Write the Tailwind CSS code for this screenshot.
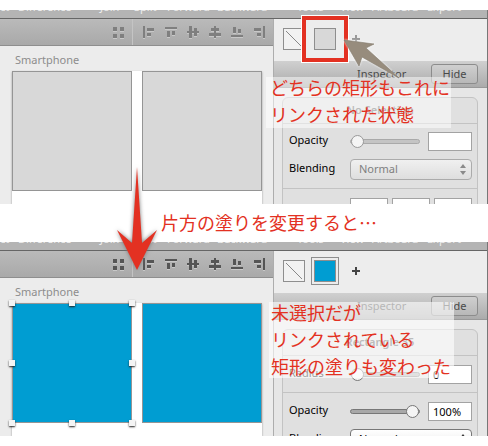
<!DOCTYPE html>
<html lang="ja">
<head>
<meta charset="utf-8">
<meta name="viewport" content="width=device-width, initial-scale=1">
<title>Linked fills</title>
<script src="https://cdn.jsdelivr.net/npm/@tailwindcss/browser@4"></script>
</head>
<body class="bg-white font-['Noto_Sans','Noto_Sans_CJK_JP',sans-serif] text-[11px] leading-4 text-black">

<svg class="hidden" aria-hidden="true">
  <symbol id="grid" viewBox="0 0 12 12"><path d="M0 1h4v4H0zM7 1h4v4H7zM0 8h4v4H0zM7 8h4v4H7z"/></symbol>
  <symbol id="a-left" viewBox="0 0 12 12"><path d="M0 0h2v12H0zM4 2h7v3H4zM4 7h4v3H4z"/></symbol>
  <symbol id="a-top" viewBox="0 0 12 12"><path d="M0 1h12v2H0zM2 5h3v6H2zM7 5h3v4H7z"/></symbol>
  <symbol id="a-mid" viewBox="0 0 12 12"><path d="M0 5h12v2H0zM2 0h3v12H2zM7 2h3v8H7z"/></symbol>
  <symbol id="a-center" viewBox="0 0 12 12"><path d="M5 0h2v12H5zM2 2h8v3H2zM0 7h12v3H0z"/></symbol>
  <symbol id="a-bottom" viewBox="0 0 12 12"><path d="M0 9h12v2H0zM2 1h3v6H2zM7 3h3v4H7z"/></symbol>
  <symbol id="a-right" viewBox="0 0 12 12"><path d="M10 0h2v12h-2zM1 2h7v3H1zM4 7h4v3H4z"/></symbol>
</svg>

<main class="relative pt-[10px]">

  <!-- Before -->
  <section class="relative">
    <div class="flex h-[194px] flex-col overflow-hidden border-r border-[#777]">
      <header class="flex h-[9px] shrink-0 items-end justify-between overflow-hidden border-b border-[#666] bg-[#b4b4b4] text-[#eee]">
        <div class="flex h-full items-end pb-[3px] whitespace-nowrap"><span class="w-[18px]">ct</span><span class="w-[82px]">Difference</span><span class="w-[34px]">Join</span><span class="w-[33px]">Split</span><span class="w-[50px]">Forward</span><span>Backward</span></div>
        <div class="flex h-full w-[190px] items-end pb-[3px] whitespace-nowrap"><span class="w-[43px]">Tools</span><span class="w-8">View</span><span class="w-[55px]">Artboard</span><span>Export</span></div>
      </header>
      <div class="flex min-h-0 flex-1">
        <div class="flex min-w-0 flex-1 flex-col bg-[#ececec]">
          <div class="flex h-[27px] shrink-0 items-center justify-end border-b border-[#8e8e8e] bg-linear-to-b from-[#bababa] to-[#a9a9a9] pr-2 text-[#7f7f7f]">
            <button aria-label="Grid" class="mr-[7px] size-3"><svg class="size-3 fill-current drop-shadow-[0_1px_0_#c8c8c8]"><use href="#grid"/></svg></button>
            <span class="h-full border-l border-[#c4c4c4]"></span>
            <div class="flex gap-[10px] pl-[10px]">
              <button aria-label="Align left" class="size-3"><svg class="size-3 fill-current drop-shadow-[0_1px_0_#c8c8c8]"><use href="#a-left"/></svg></button>
              <button aria-label="Align top" class="size-3"><svg class="size-3 fill-current drop-shadow-[0_1px_0_#c8c8c8]"><use href="#a-top"/></svg></button>
              <button aria-label="Align middle" class="size-3"><svg class="size-3 fill-current drop-shadow-[0_1px_0_#c8c8c8]"><use href="#a-mid"/></svg></button>
              <button aria-label="Align center" class="size-3"><svg class="size-3 fill-current drop-shadow-[0_1px_0_#c8c8c8]"><use href="#a-center"/></svg></button>
              <button aria-label="Align bottom" class="size-3"><svg class="size-3 fill-current drop-shadow-[0_1px_0_#c8c8c8]"><use href="#a-bottom"/></svg></button>
              <button aria-label="Align right" class="size-3"><svg class="size-3 fill-current drop-shadow-[0_1px_0_#c8c8c8]"><use href="#a-right"/></svg></button>
            </div>
          </div>
          <h2 class="h-[25px] shrink-0 pt-[6px] pl-[15px] text-[#8c8c8c]">Smartphone</h2>
          <div class="mr-[11px] ml-3 flex flex-1 items-start gap-[10px] bg-white shadow-[0_1px_2px_#999]">
            <div class="h-[120px] flex-1 border border-[#959595] bg-[#d8d8d8]"></div>
            <div class="h-[120px] flex-1 border border-[#959595] bg-[#d8d8d8]"></div>
          </div>
        </div>

        <aside class="flex w-[214px] shrink-0 flex-col border-l border-[#adadad] bg-[#e6e6e6]">
          <div class="flex h-[42px] shrink-0 items-center bg-[#ededed] pb-[2px] pl-[9px]">
            <button aria-label="No fill" class="size-[22px] border border-[#8e8e8e] bg-[#f2f2f2]"><svg class="size-5" viewBox="0 0 20 20"><path d="M2 2l16 16" stroke="#888"/></svg></button>
            <button aria-label="Gray fill" class="ml-[9px] size-[22px] border border-[#8e8e8e] bg-[#d8d8d8]"></button>
            <button aria-label="Add fill" class="ml-4 size-2"><svg class="size-2" viewBox="0 0 8 8"><path d="M3 0h2v3h3v2H5v3H3V5H0V3h3z" fill="#999"/></svg></button>
          </div>
          <div class="flex h-[27px] shrink-0 items-center justify-end border-b border-[#999] bg-linear-to-b from-[#d0d0d0] to-[#ababab] pr-[9px] text-[#4a4a4a]">
            <h3 class="w-[74px]">Inspector</h3>
            <button class="h-5 w-[47px] rounded-[3px] border border-[#8c8c8c] bg-linear-to-b from-[#cfcfcf] to-[#b8b8b8]">Hide</button>
          </div>
          <div class="mt-[9px] mr-[9px] ml-2 flex-1 rounded-t-md border border-[#c3c3c3] bg-[#e0e0e0]">
            <h4 class="h-[26px] border-b border-[#c3c3c3] pt-[4px] text-center font-semibold text-[#777]">No Selection</h4>
            <div class="grid h-[65px] grid-cols-[61px_70px_1fr] content-start items-center gap-y-2 border-b border-[#c3c3c3] pt-2 pr-[5px] pl-[6px]">
              <label for="op1" class="pb-[3px]">Opacity</label>
              <input id="op1" type="range" value="0" class="h-[19px] w-[70px] appearance-none bg-transparent [&::-webkit-slider-runnable-track]:h-[5px] [&::-webkit-slider-runnable-track]:rounded-full [&::-webkit-slider-runnable-track]:border [&::-webkit-slider-runnable-track]:border-[#a9a9a9] [&::-webkit-slider-runnable-track]:bg-[#c4c4c4] [&::-webkit-slider-thumb]:mt-[-5px] [&::-webkit-slider-thumb]:size-[13px] [&::-webkit-slider-thumb]:appearance-none [&::-webkit-slider-thumb]:rounded-full [&::-webkit-slider-thumb]:border [&::-webkit-slider-thumb]:border-[#999] [&::-webkit-slider-thumb]:bg-[#f4f4f4]">
              <input type="text" aria-label="Opacity value" class="ml-2 h-[19px] min-w-0 border border-[#a3a3a3] bg-white px-1">
              <label for="bl1" class="pb-[3px]">Blending</label>
              <div class="relative col-span-2">
                <select id="bl1" class="block h-[21px] w-full appearance-none rounded-[4px] border border-[#ababab] bg-linear-to-b from-[#f0f0f0] to-[#dedede] pb-[2px] pl-2 text-[#808080]"><option>Normal</option></select>
                <svg class="pointer-events-none absolute top-[5px] right-[6px] h-[11px] w-[6px] fill-[#8a8a8a]" viewBox="0 0 6 11"><path d="M3 0l3 4H0zM3 11L0 7h6z"/></svg>
              </div>
            </div>
            <div class="flex gap-1 pt-[9px] pr-[5px] pl-[67px]">
              <input type="text" aria-label="X" class="h-[19px] min-w-0 flex-1 border border-[#a3a3a3] bg-white">
              <input type="text" aria-label="Y" class="h-[19px] min-w-0 flex-1 border border-[#a3a3a3] bg-white">
              <input type="text" aria-label="Z" class="h-[19px] min-w-0 flex-1 border border-[#a3a3a3] bg-white">
            </div>
          </div>
        </aside>
      </div>
    </div>

    <!-- Annotations -->
    <div class="absolute top-[6px] right-[140px] size-[46px] border-4 border-[#e33122] outline outline-white"></div>
    <p class="absolute top-[67px] right-[37px] h-[51px] w-[185px] bg-white/50 pl-1 font-['Noto_Sans_CJK_JP',sans-serif] text-[18px] leading-[27px] whitespace-nowrap text-[#e33122]"><span class="-mt-[3px] block">どちらの矩形もこれに<br>リンクされた状態</span></p>
    <svg class="pointer-events-none absolute top-[28px] right-[85px] h-[44px] w-[62px] drop-shadow-[0_0_1px_#fff]" viewBox="0 0 62 44"><path d="M3 2L33 6L25 10L58 40L21 19L18 28Z" fill="#978c7d" stroke="#81786b" stroke-width=".6"/></svg>
  </section>

  <p class="flex h-[38px] items-center pb-[2px] pl-[161px] font-['Noto_Sans_CJK_JP',sans-serif] text-[18px] leading-[27px] whitespace-nowrap text-[#e33122]">片方の塗りを変更すると…</p>

  <!-- After -->
  <section class="relative">
    <div class="flex h-[194px] flex-col overflow-hidden border-r border-[#777]">
      <header class="flex h-[9px] shrink-0 items-end justify-between overflow-hidden border-b border-[#666] bg-[#b4b4b4] text-[#eee]">
        <div class="flex h-full items-end pb-[3px] whitespace-nowrap"><span class="w-[18px]">ct</span><span class="w-[82px]">Difference</span><span class="w-[34px]">Join</span><span class="w-[33px]">Split</span><span class="w-[50px]">Forward</span><span>Backward</span></div>
        <div class="flex h-full w-[190px] items-end pb-[3px] whitespace-nowrap"><span class="w-[43px]">Tools</span><span class="w-8">View</span><span class="w-[55px]">Artboard</span><span>Export</span></div>
      </header>
      <div class="flex min-h-0 flex-1">
        <div class="flex min-w-0 flex-1 flex-col bg-[#ececec]">
          <div class="flex h-[27px] shrink-0 items-center justify-end border-b border-[#8e8e8e] bg-linear-to-b from-[#bababa] to-[#a9a9a9] pr-2 text-[#555]">
            <button aria-label="Grid" class="mr-[7px] size-3"><svg class="size-3 fill-current drop-shadow-[0_1px_0_#c8c8c8]"><use href="#grid"/></svg></button>
            <span class="h-full border-l border-[#c4c4c4]"></span>
            <div class="flex gap-[10px] pl-[10px]">
              <button aria-label="Align left" class="size-3"><svg class="size-3 fill-current drop-shadow-[0_1px_0_#c8c8c8]"><use href="#a-left"/></svg></button>
              <button aria-label="Align top" class="size-3"><svg class="size-3 fill-current drop-shadow-[0_1px_0_#c8c8c8]"><use href="#a-top"/></svg></button>
              <button aria-label="Align middle" class="size-3"><svg class="size-3 fill-current drop-shadow-[0_1px_0_#c8c8c8]"><use href="#a-mid"/></svg></button>
              <button aria-label="Align center" class="size-3"><svg class="size-3 fill-current drop-shadow-[0_1px_0_#c8c8c8]"><use href="#a-center"/></svg></button>
              <button aria-label="Align bottom" class="size-3"><svg class="size-3 fill-current drop-shadow-[0_1px_0_#c8c8c8]"><use href="#a-bottom"/></svg></button>
              <button aria-label="Align right" class="size-3"><svg class="size-3 fill-current drop-shadow-[0_1px_0_#c8c8c8]"><use href="#a-right"/></svg></button>
            </div>
          </div>
          <h2 class="h-[25px] shrink-0 pt-[6px] pl-[15px] text-[#8c8c8c]">Smartphone</h2>
          <div class="mr-[11px] ml-3 flex flex-1 items-start gap-[10px] bg-white shadow-[0_1px_2px_#999]">
            <div class="relative h-[120px] flex-1 border border-[#959595] bg-[#009dd2]">
              <i class="absolute -top-1 -left-1 size-[6px] bg-[#f4f4f4] shadow-[0_1px_2px_#222]"></i>
              <i class="absolute -top-1 left-1/2 -ml-[3px] size-[6px] bg-[#f4f4f4] shadow-[0_1px_2px_#222]"></i>
              <i class="absolute -top-1 -right-1 size-[6px] bg-[#f4f4f4] shadow-[0_1px_2px_#222]"></i>
              <i class="absolute top-1/2 -left-1 -mt-[3px] size-[6px] bg-[#f4f4f4] shadow-[0_1px_2px_#222]"></i>
              <i class="absolute top-1/2 -right-1 -mt-[3px] size-[6px] bg-[#f4f4f4] shadow-[0_1px_2px_#222]"></i>
              <i class="absolute -bottom-1 -left-1 size-[6px] bg-[#f4f4f4] shadow-[0_1px_2px_#222]"></i>
              <i class="absolute -bottom-1 left-1/2 -ml-[3px] size-[6px] bg-[#f4f4f4] shadow-[0_1px_2px_#222]"></i>
              <i class="absolute -right-1 -bottom-1 size-[6px] bg-[#f4f4f4] shadow-[0_1px_2px_#222]"></i>
            </div>
            <div class="h-[120px] flex-1 border border-[#959595] bg-[#009dd2]"></div>
          </div>
        </div>

        <aside class="flex w-[214px] shrink-0 flex-col border-l border-[#adadad] bg-[#e6e6e6]">
          <div class="flex h-[42px] shrink-0 items-center bg-[#ededed] pb-[2px] pl-[9px]">
            <button aria-label="No fill" class="size-[22px] border border-[#8e8e8e] bg-[#f2f2f2]"><svg class="size-5" viewBox="0 0 20 20"><path d="M2 2l16 16" stroke="#888"/></svg></button>
            <button aria-label="Blue fill" class="ml-[6px] size-7 border border-[#8e8e8e] p-[2px]"><span class="block size-full border border-[#8e8e8e] bg-[#009dd2]"></span></button>
            <button aria-label="Add fill" class="ml-[13px] size-2"><svg class="size-2" viewBox="0 0 8 8"><path d="M3 0h2v3h3v2H5v3H3V5H0V3h3z" fill="#444"/></svg></button>
          </div>
          <div class="flex h-[27px] shrink-0 items-center justify-end border-b border-[#999] bg-linear-to-b from-[#d0d0d0] to-[#ababab] pr-[9px] text-[#4a4a4a]">
            <h3 class="w-[74px]">Inspector</h3>
            <button class="h-5 w-[47px] rounded-[3px] border border-[#8c8c8c] bg-linear-to-b from-[#cfcfcf] to-[#b8b8b8]">Hide</button>
          </div>
          <div class="mt-[9px] mr-[9px] ml-2 flex-1 rounded-t-md border border-[#c3c3c3] bg-[#e0e0e0]">
            <h4 class="h-[26px] border-b border-[#c3c3c3] pt-[4px] text-center font-semibold text-[#555]">Rectangle 35</h4>
            <div class="grid h-[37px] grid-cols-[61px_70px_1fr] items-center border-b border-[#c3c3c3] pr-[5px] pl-[6px]">
              <label for="ra2" class="pb-[3px]">Radius</label>
              <input id="ra2" type="range" value="0" class="h-[19px] w-[70px] appearance-none bg-transparent [&::-webkit-slider-runnable-track]:h-[5px] [&::-webkit-slider-runnable-track]:rounded-full [&::-webkit-slider-runnable-track]:border [&::-webkit-slider-runnable-track]:border-[#888] [&::-webkit-slider-runnable-track]:bg-[#b4b4b4] [&::-webkit-slider-thumb]:mt-[-5px] [&::-webkit-slider-thumb]:size-[13px] [&::-webkit-slider-thumb]:appearance-none [&::-webkit-slider-thumb]:rounded-full [&::-webkit-slider-thumb]:border [&::-webkit-slider-thumb]:border-[#777] [&::-webkit-slider-thumb]:bg-[#f4f4f4]">
              <input type="text" aria-label="Radius value" value="0" class="ml-2 h-[19px] min-w-0 border border-[#a3a3a3] bg-white px-1">
            </div>
            <div class="grid h-[65px] grid-cols-[61px_70px_1fr] content-start items-center gap-y-2 pt-[9px] pr-[5px] pl-[6px]">
              <label for="op2" class="pb-[3px]">Opacity</label>
              <input id="op2" type="range" value="100" class="h-[19px] w-[70px] appearance-none bg-transparent [&::-webkit-slider-runnable-track]:h-[5px] [&::-webkit-slider-runnable-track]:rounded-full [&::-webkit-slider-runnable-track]:border [&::-webkit-slider-runnable-track]:border-[#777] [&::-webkit-slider-runnable-track]:bg-[#a8a8a8] [&::-webkit-slider-thumb]:mt-[-5px] [&::-webkit-slider-thumb]:size-[13px] [&::-webkit-slider-thumb]:appearance-none [&::-webkit-slider-thumb]:rounded-full [&::-webkit-slider-thumb]:border [&::-webkit-slider-thumb]:border-[#777] [&::-webkit-slider-thumb]:bg-[#f4f4f4]">
              <input type="text" aria-label="Opacity value" value="100%" class="ml-2 h-[19px] min-w-0 border border-[#a3a3a3] bg-white px-1">
              <label for="bl2" class="pb-[3px]">Blending</label>
              <div class="relative col-span-2">
                <select id="bl2" class="block h-[21px] w-full appearance-none rounded-[4px] border border-[#777] bg-linear-to-b from-white to-[#e8e8e8] pb-[2px] pl-2"><option>Normal</option></select>
                <svg class="pointer-events-none absolute top-[5px] right-[6px] h-[11px] w-[6px] fill-[#333]" viewBox="0 0 6 11"><path d="M3 0l3 4H0zM3 11L0 7h6z"/></svg>
              </div>
            </div>
          </div>
        </aside>
      </div>
    </div>
    <p class="absolute top-[60px] right-[34px] h-[76px] w-[185px] bg-white/60 pl-[2px] font-['Noto_Sans_CJK_JP',sans-serif] text-[18px] leading-[27px] whitespace-nowrap text-[#e33122]"><span class="-mt-[3px] block">未選択だが<br>リンクされている<br>矩形の塗りも変わった</span></p>
  </section>

  <svg class="pointer-events-none absolute top-[165px] left-[115px] h-[107px] w-[44px] drop-shadow-[0_0_2px_#777]" viewBox="0 0 44 107"><path d="M22 2L27 78L42 65L22 105L2 65L17 78Z" fill="#e33122"/></svg>
</main>
</body>
</html>
